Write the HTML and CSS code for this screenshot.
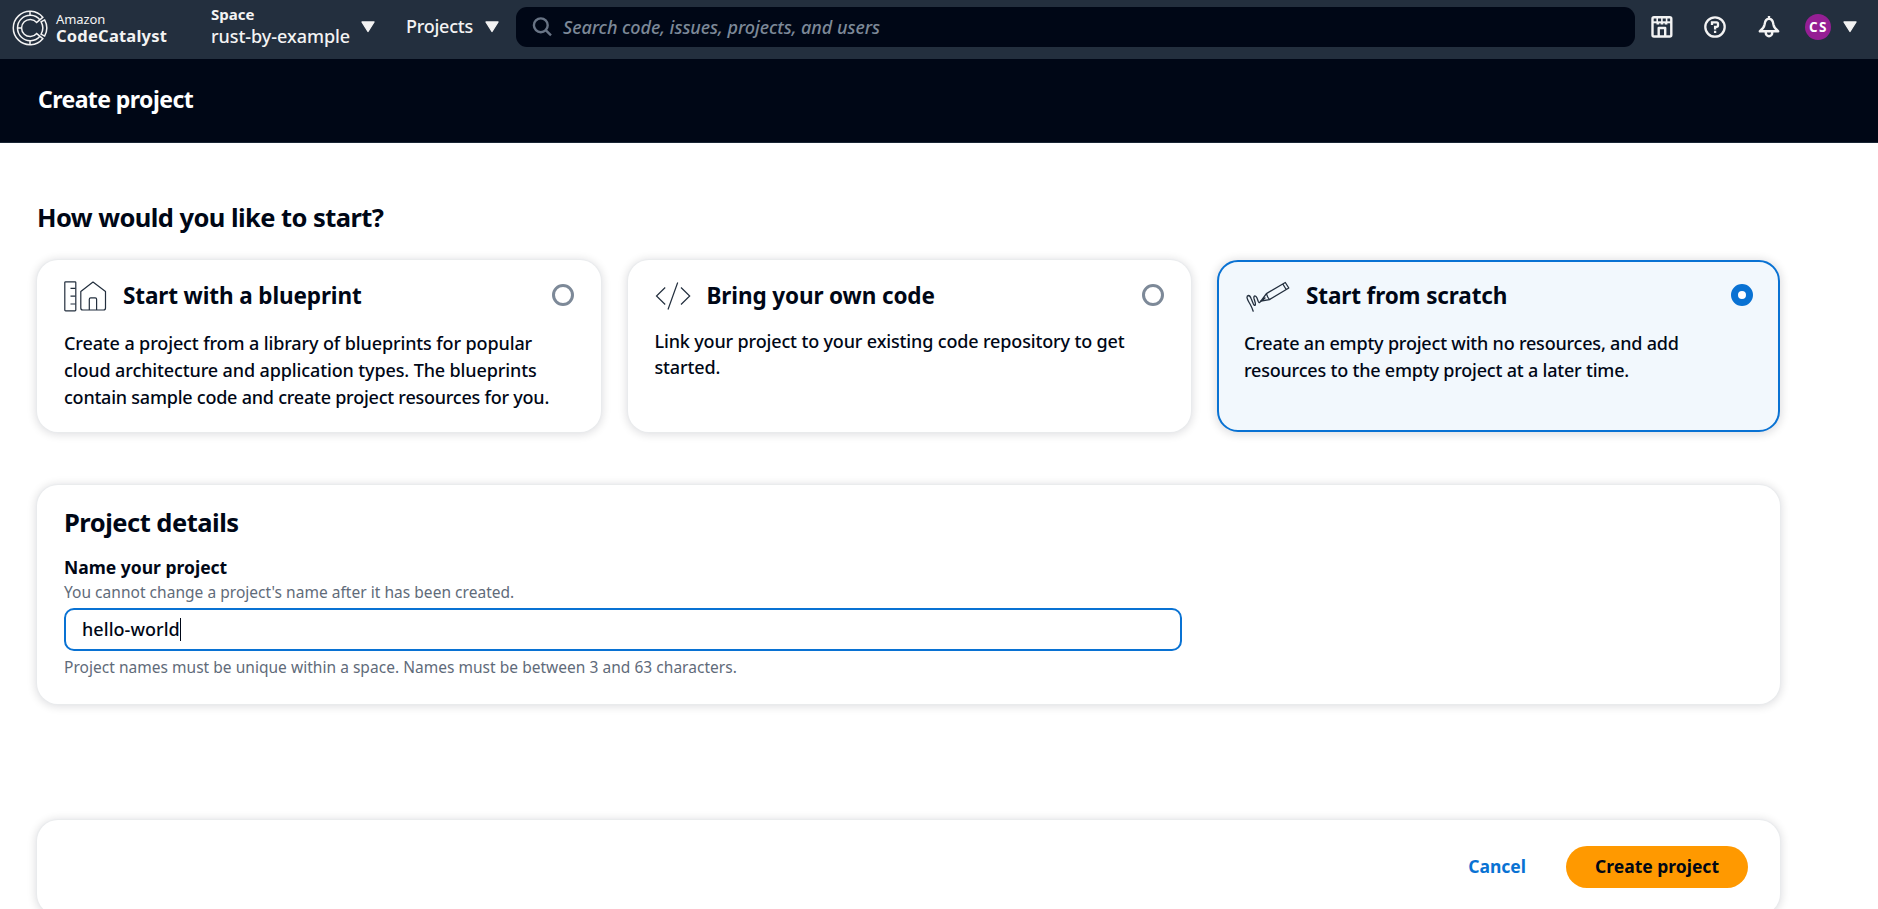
FILE: index.html
```html
<!DOCTYPE html>
<html lang="en">
<head>
<meta charset="utf-8">
<title>Create project - Amazon CodeCatalyst</title>
<link rel="stylesheet" href="styles.css">
</head>
<body>
<header class="topbar">
  <a class="brand">
    <svg class="logo" width="36" height="36" viewBox="-18 -18 36 36" fill="none" stroke="#f3f3f3" stroke-width="1.5">
      <path d="M12.8 -10.7A16.7 16.7 0 1 0 12.8 10.7L6.7 5.6A8.6 8.6 0 1 1 6.7 -5.6Z"/>
      <path d="M9.9 -8.2A12.7 12.7 0 1 0 9.9 8.2M0 -16.7V-12.7M0 16.7V12.7M-12.7 0H-8.6"/>
      <path d="M14.6 -8.1A16.7 16.7 0 0 1 14.6 8.1L11.1 6.2A12.7 12.7 0 0 0 11.1 -6.2Z"/>
    </svg>
    <span class="brand-text"><span class="brand-small">Amazon</span><span class="brand-big">CodeCatalyst</span></span>
  </a>
  <div class="space">
    <div class="space-text"><span class="space-label">Space</span><span class="space-name">rust-by-example</span></div>
    <svg class="caret" width="14" height="12" viewBox="0 0 14 12"><path d="M1 1H13L7 10.5Z"/></svg>
  </div>
  <div class="projects"><span>Projects</span><svg class="caret" width="14" height="12" viewBox="0 0 14 12"><path d="M1 1H13L7 10.5Z"/></svg></div>
  <div class="search">
    <svg width="20" height="20" viewBox="0 0 20 20" fill="none" stroke="#687485" stroke-width="2.4"><circle cx="8.8" cy="8.3" r="6.9"/><path d="M13.7 13.2L19 18.3"/></svg>
    <span>Search code, issues, projects, and users</span>
  </div>
  <div class="actions">
    <svg width="22" height="22" viewBox="0 0 22 22" fill="none" stroke="#f3f3f3" stroke-width="2.4" stroke-linejoin="round">
      <rect x="1.5" y="1.3" width="18.8" height="19.2" rx="1.5"/><path d="M1.5 6.3H20.3" stroke-width="2"/><path d="M6.2 2V6M10.9 2V6M15.6 2V6" stroke-width="1.6"/><path d="M5.5 7.8H8.2M9.6 7.8H12.3M13.7 7.8H16.4" stroke-width="1.4"/><path d="M7.7 20V12H14.2V20"/>
    </svg>
    <svg width="22" height="22" viewBox="0 0 22 22" fill="none" stroke="#f3f3f3" stroke-width="2.3">
      <circle cx="11" cy="11" r="9.7"/><path d="M8 8.9V6.4H12.6Q14 6.4 14 7.8V9.5Q14 10.8 12.6 10.8H11.1V13.4M11.1 14.8V17"/>
    </svg>
    <svg width="22" height="22" viewBox="0 0 22 22" fill="none" stroke="#f3f3f3" stroke-width="2.4" stroke-linejoin="round">
      <path d="M11 0V3M1.8 15.2H20.2C17 13 15.8 11 15.4 8.4C15 5 13.6 2.8 11 2.8C8.4 2.8 7 5 6.6 8.4C6.2 11 5 13 1.8 15.2Z"/><path d="M7.8 15.5V17A3.2 3.2 0 0 0 14.2 17V15.5"/>
    </svg>
    <span class="avatar">CS</span>
    <svg class="caret" width="14" height="12" viewBox="0 0 14 12"><path d="M1 1H13L7 10.5Z"/></svg>
  </div>
</header>
<div class="band"><h1>Create project</h1></div>
<main class="main">
  <h2 class="question">How would you like to start?</h2>
  <section class="choices">
    <article class="card choice">
      <div class="choice-head">
        <svg width="43" height="31" viewBox="0 0 43 31" fill="none" stroke="#232f3e" stroke-width="1.2" stroke-linejoin="round">
          <rect x=".8" y=".8" width="11" height="29" rx=".8"/><path d="M6.5 7.3H11.5M6.5 15.2H11.5M6.5 23H11.5"/>
          <path d="M16.8 10.5L29 1L41.5 10.5V27Q41.5 29 39.5 29H18.8Q16.8 29 16.8 27Z"/><path d="M25.3 29V18.2Q25.3 16.8 26.7 16.8H31.2Q32.6 16.8 32.6 18.2V29"/>
        </svg>
        <h3>Start with a blueprint</h3><span class="radio"></span>
      </div>
      <p>Create a project from a library of blueprints for popular<br>cloud architecture and application types. The blueprints<br><span class="tight">contain sample code and create project resources for you.</span></p>
    </article>
    <article class="card choice choice-code">
      <div class="choice-head">
        <svg width="36" height="31" viewBox="0 0 36 31" fill="none" stroke="#232f3e" stroke-width="1.2">
          <path d="M10.2 6.5L1.5 15L10.2 23.5M26 6.5L34.7 15L26 23.5M22.7 1.5L13 28.5"/>
        </svg>
        <h3>Bring your own code</h3><span class="radio"></span>
      </div>
      <p>Link your project to your existing code repository to get<br>started.</p>
    </article>
    <article class="card choice selected">
      <div class="choice-head">
        <svg width="46" height="31" viewBox="-1 0 46 31" fill="none" stroke="#232f3e" stroke-width="1.3" stroke-linejoin="round" stroke-linecap="round">
          <path d="M16 20L21.4 12.6L40.3 1.5L43.8 7L24.5 18.6ZM21.4 12.6Q22.3 16 24.5 18.6M37.8 3L41.2 8.5M16 20L20 17"/>
          <path d="M8.2 30.2Q7 26.5 5.3 23.5Q2.2 18.5 2 16.5Q1.9 14.6 3.5 14.5Q5 14.5 6.1 17.5L8.4 23Q9.3 24.8 10.1 24.2Q10.8 23.5 9.9 20.5L9 17.5Q8.5 15.2 9.8 14.8Q11.1 14.7 12 17L13.3 20.5Q14.3 22.3 15 21.2L16 20"/>
        </svg>
        <h3>Start from scratch</h3><span class="radio"></span>
      </div>
      <p>Create an empty project with no resources, and add<br>resources to the empty project at a later time.</p>
    </article>
  </section>
  <section class="card details">
    <h2>Project details</h2>
    <label class="name-label">Name your project</label>
    <span class="hint">You cannot change a project's name after it has been created.</span>
    <div class="field"><span>hello-world</span><i class="cursor"></i></div>
    <span class="hint">Project names must be unique within a space. Names must be between 3 and 63 characters.</span>
  </section>
  <footer class="card footer"><a class="cancel">Cancel</a><button class="submit">Create project</button></footer>
</main>
</body>
</html>
```
FILE: styles.css
```css
* { box-sizing: border-box; }
html, body { height: 100%; }
body { margin: 0; overflow: hidden; background: #fff; color: #000716; font: 500 18px/27px "Noto Sans", "Open Sans", sans-serif; }
h1, h2, h3, p { margin: 0; }
svg { display: block; flex: none; }

.topbar { display: flex; align-items: flex-start; height: 59px; background: #232f3e; color: #f3f3f3; }
.brand { display: flex; gap: 8px; width: 211px; padding: 10px 0 0 12px; }
.brand-text, .space-text { display: flex; flex-direction: column; white-space: nowrap; }
.brand-small { margin-top: 1px; font-size: 13px; font-weight: 400; line-height: 16px; letter-spacing: -0.1px; }
.brand-big { font-size: 16.5px; font-weight: 700; line-height: 18px; letter-spacing: 0.22px; }
.space { display: flex; width: 195px; padding-top: 4px; }
.space-label { font-size: 15px; font-weight: 700; line-height: 20px; }
.space-name { line-height: 24px; letter-spacing: -0.05px; }
.caret { fill: #f3f3f3; stroke: #f3f3f3; stroke-width: 1.4; stroke-linejoin: round; }
.space .caret { margin: 17px 0 0 11px; }
.projects { display: flex; width: 110px; padding-top: 14px; line-height: 24px; letter-spacing: -0.25px; }
.projects .caret { margin: 7px 0 0 12px; }
.search { display: flex; align-items: center; gap: 11px; width: 1119px; height: 40px; margin-top: 7px; padding-left: 16px; border-radius: 11px; background: #000716; color: #7d8998; font-style: italic; line-height: 24px; letter-spacing: -0.04px; }
.search svg { margin-bottom: 1px; }
.actions { display: flex; align-items: center; height: 53px; padding-left: 15.5px; }
.actions > svg { margin-right: 31.5px; }
.avatar { width: 26px; height: 26px; margin-left: -6px; border-radius: 50%; background: #951f94; color: #fff; font: 700 13.5px/26px "Open Sans", sans-serif; letter-spacing: 1.5px; padding-left: 1px; text-align: center; }
.actions > .caret { margin: 0 0 0 12px; }

.band { height: 84px; padding: 24px 37px 0 38px; background: #000716; border-bottom: 1px solid #192534; color: #fff; }
.band h1 { font-size: 23px; line-height: 32px; letter-spacing: -0.56px; }

.main { padding: 56px 98px 0 37px; }
.question, .details h2 { font-size: 25.5px; line-height: 36px; letter-spacing: -0.56px; }
.choices { display: grid; grid-template-columns: 564px 563px 563px; justify-content: space-between; margin-top: 25px; }
.card { border-radius: 21px; background: #fff; box-shadow: 0 0 1px 1px #e9ebed, 0 1px 9px 2px rgba(0, 7, 22, 0.12); }
.choice { height: 172px; padding: 21px 27px 0; white-space: nowrap; }
.choice-head { display: flex; align-items: center; height: 30px; }
.choice-head h3 { margin-left: 16px; font-size: 22.5px; line-height: 30px; letter-spacing: -0.12px; }
.radio { width: 22px; height: 22px; margin: -3px 0 0 auto; border: 3px solid #7d8998; border-radius: 50%; background: #fff; }
.choice p { margin-top: 19px; letter-spacing: -0.12px; }
.choice .tight { letter-spacing: -0.23px; }
.choice-code p { margin-top: 17px; line-height: 26px; letter-spacing: -0.15px; }
.selected { padding: 19px 25px 0; border: 2px solid #0972d3; background: #f2f8fd; box-shadow: 0 1px 9px 2px rgba(0, 7, 22, 0.12); }
.selected .radio { border: 7px solid #0972d3; }
.selected p { letter-spacing: -0.2px; }

.details { display: flex; flex-direction: column; height: 219px; margin-top: 53px; padding: 19px 27px 0; }
.details h2 { letter-spacing: -0.5px; }
.name-label { margin-top: 15px; font-size: 17.5px; font-weight: 700; line-height: 24px; }
.hint { margin-top: 2px; color: #5f6b7a; font-size: 15.5px; font-weight: 400; line-height: 22px; letter-spacing: 0.03px; }
.field { display: flex; align-items: center; width: 1118px; height: 43px; margin: 5px 0 3px; padding-left: 16px; border: 2px solid #0972d3; border-radius: 10px; letter-spacing: 0.05px; }
.cursor { width: 1px; height: 23px; background: #000716; }

.footer { display: flex; justify-content: flex-end; align-items: flex-start; height: 95px; margin-top: 116px; padding: 26px 32px 0 0; font-size: 17.5px; font-weight: 700; }
.cancel { margin-right: 40px; color: #0972d3; line-height: 40px; }
.submit { width: 182px; height: 42px; padding: 0 0 2px; border: 0; border-radius: 21px; background: #ff9900; color: #000716; font: inherit; }
```
